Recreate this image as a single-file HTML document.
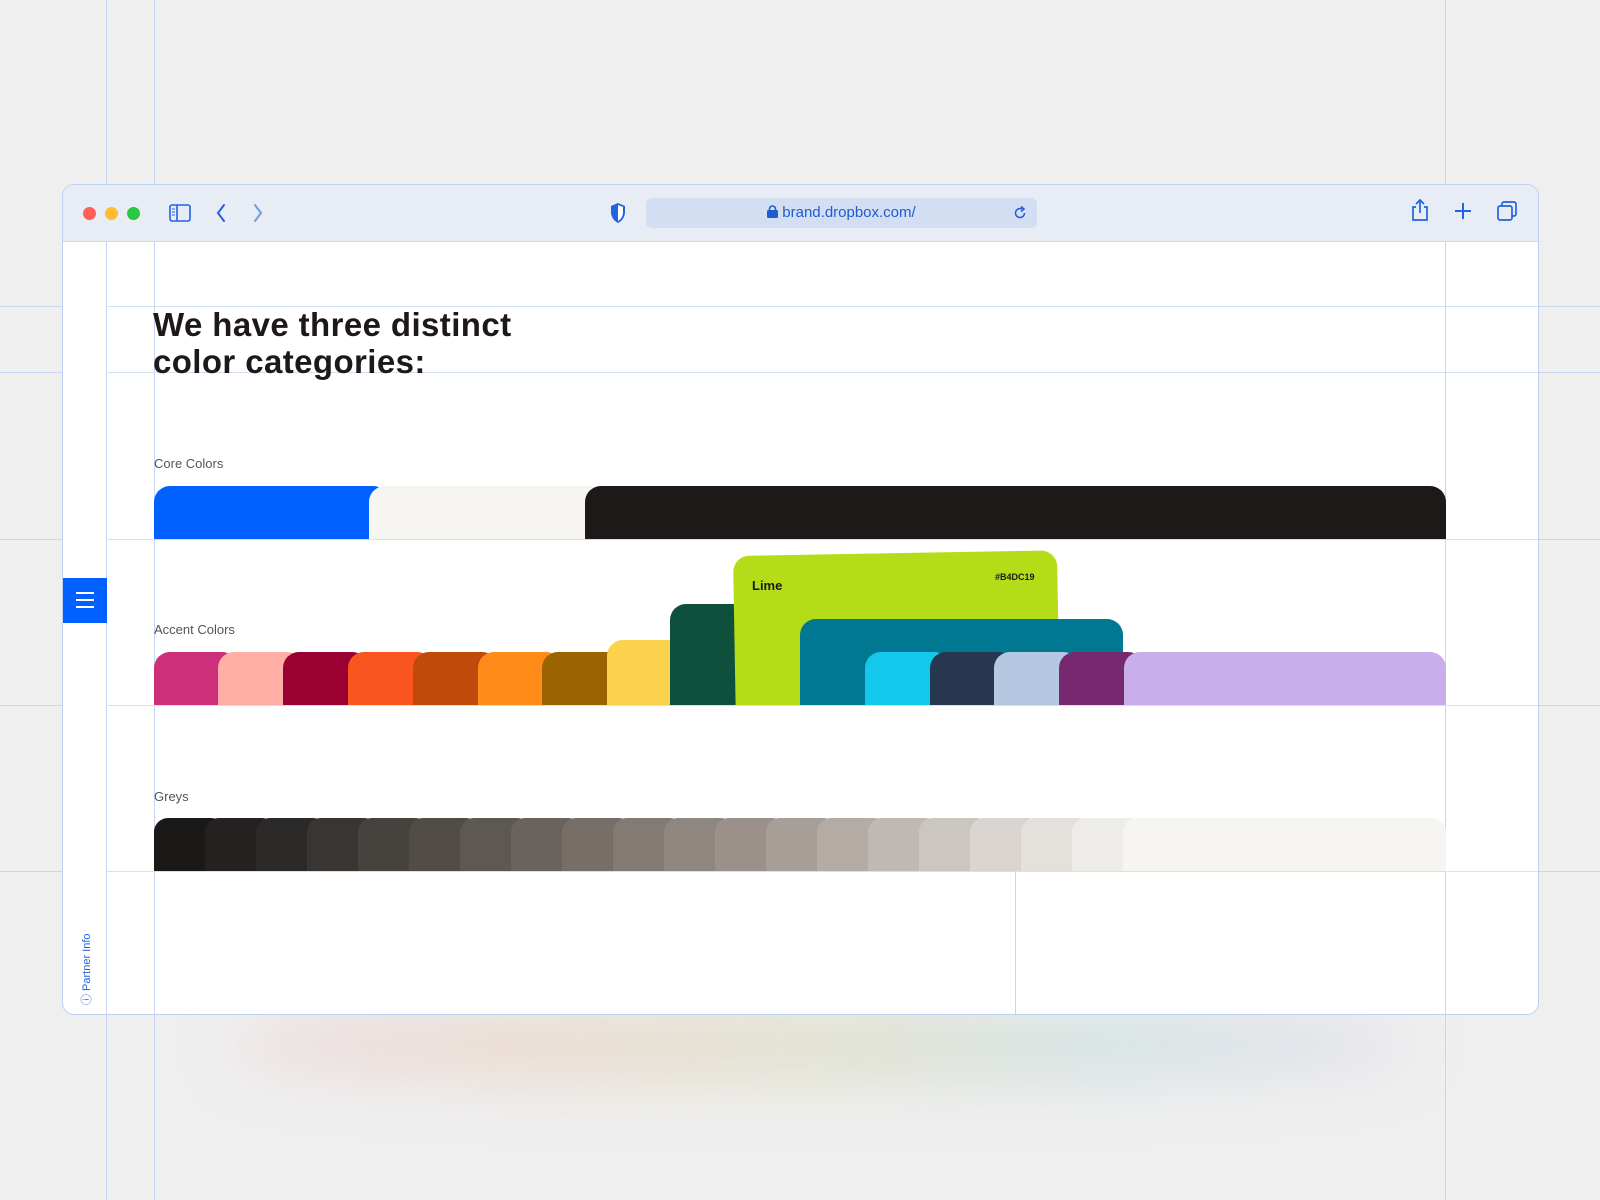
<!DOCTYPE html>
<html><head><meta charset="utf-8"><style>
*{margin:0;padding:0;box-sizing:border-box}
body{width:1600px;height:1200px;background:#efefef;position:relative;overflow:hidden;font-family:"Liberation Sans",sans-serif}
.vl{position:absolute;top:0;bottom:0;width:1px;background:#c6d6f3}
.hl{position:absolute;height:1px;background:#c6d6f3}
.win{position:absolute;left:62px;top:184px;width:1477px;height:831px;background:#fff;border:1.5px solid #bcd0f5;border-radius:12px;overflow:hidden}
.tb{position:absolute;left:0;top:0;right:0;height:57px;background:#e8edf5;border-bottom:1px solid #c9d8f2}
.dot{position:absolute;top:22px;width:13px;height:13px;border-radius:50%}
.ab{position:absolute}
.bar{position:absolute;border-radius:16px 16px 0 0}
.g{position:absolute;top:818px;height:53px;border-radius:14px 14px 0 0}
.lbl{position:absolute;left:154px;font-size:13px;color:#555}
</style></head><body>
<div style="position:absolute;left:230px;top:1005px;width:1180px;height:80px;filter:blur(30px);background:linear-gradient(90deg,#e8cccf,#e8d3c3,#dcdcc3,#cadde0,#d6d6e4);border-radius:50%;opacity:.7"></div>
<div class="vl" style="left:106px"></div>
<div class="vl" style="left:154px"></div>
<div class="vl" style="left:1445px"></div>
<div class="hl" style="left:0;right:0;top:306px"></div>
<div class="hl" style="left:0;right:0;top:372px"></div>
<div class="hl" style="left:0;right:0;top:539px"></div>
<div class="hl" style="left:0;right:0;top:705px"></div>
<div class="hl" style="left:0;right:0;top:871px"></div>
<div class="win">
<div class="ab" style="left:43px;top:0;bottom:0;width:1px;background:#c6d6f3"></div>
<div class="ab" style="left:91px;top:0;bottom:0;width:1px;background:#c6d6f3"></div>
<div class="ab" style="left:1382px;top:0;bottom:0;width:1px;background:#c6d6f3"></div>
<div class="ab" style="left:952px;top:686px;bottom:0;width:1px;background:#c6d6f3"></div>
<div class="ab" style="left:43px;right:0;top:121px;height:1px;background:#d4e0f5"></div>
<div class="ab" style="left:43px;right:0;top:187px;height:1px;background:#d4e0f5"></div>
<div class="ab" style="left:43px;right:0;top:354px;height:1px;background:#d4e0f5"></div>
<div class="ab" style="left:43px;right:0;top:520px;height:1px;background:#d4e0f5"></div>
<div class="ab" style="left:43px;right:0;top:686px;height:1px;background:#d4e0f5"></div>
<div class="tb">
<div class="dot" style="left:20px;background:#fe5f57"></div>
<div class="dot" style="left:42px;background:#febc2e"></div>
<div class="dot" style="left:64px;background:#28c840"></div>
<svg class="ab" style="left:106px;top:19px" width="22" height="18" viewBox="0 0 22 18"><rect x="1" y="1" width="20" height="16" rx="2" fill="none" stroke="#2163e0" stroke-width="1.6"/><line x1="8" y1="1" x2="8" y2="17" stroke="#2163e0" stroke-width="1.6"/><path d="M3 5h3M3 8h3M3 11h3" stroke="#2163e0" stroke-width="1"/></svg>
<svg class="ab" style="left:152px;top:18px" width="12" height="20"><path d="M9 2L3 10l6 8" fill="none" stroke="#2163e0" stroke-width="2" stroke-linecap="round"/></svg>
<svg class="ab" style="left:189px;top:18px" width="12" height="20"><path d="M3 2l6 8-6 8" fill="none" stroke="#6d9de8" stroke-width="2" stroke-linecap="round"/></svg>
<svg class="ab" style="left:546px;top:17px" width="18" height="22"><path d="M9 1L2 4v6c0 5 3 9 7 11 4-2 7-6 7-11V4z" fill="#2163e0"/><path d="M9 3v16c3-2 5-5 5-9V5z" fill="#fff"/></svg>
<div class="ab" style="left:583px;top:13px;width:391px;height:30px;background:#d3def2;border-radius:6px;text-align:center;font-size:15px;line-height:30px;color:#1f5bd1">
<svg width="11" height="13" style="vertical-align:-1px;margin-right:4px"><rect x="0" y="5" width="11" height="8" rx="1.5" fill="#1f5bd1"/><path d="M2.5 6V4a3 3 0 016 0v2" fill="none" stroke="#1f5bd1" stroke-width="1.6"/></svg>brand.dropbox.com/
<svg class="ab" style="right:10px;top:8px" width="14" height="14"><path d="M11.5 7A4.5 4.5 0 1 1 9 3" fill="none" stroke="#1f5bd1" stroke-width="1.5"/><path d="M8 0.5l3 2.5-3 2.5" fill="none" stroke="#1f5bd1" stroke-width="1.5"/></svg></div>
<svg class="ab" style="left:1347px;top:13px" width="20" height="24"><path d="M6 9H3v13h14V9h-3M10 2v13M6 6l4-4 4 4" fill="none" stroke="#2163e0" stroke-width="1.7"/></svg>
<svg class="ab" style="left:1391px;top:17px" width="18" height="18"><path d="M9 1v16M1 9h16" stroke="#2163e0" stroke-width="2"/></svg>
<svg class="ab" style="left:1434px;top:16px" width="20" height="20"><rect x="1" y="5" width="14" height="14" rx="2" fill="none" stroke="#2163e0" stroke-width="1.7"/><path d="M5 5V3a2 2 0 012-2h10a2 2 0 012 2v10a2 2 0 01-2 2h-2" fill="none" stroke="#2163e0" stroke-width="1.7"/></svg>
</div>
<div class="ab" style="left:0;top:393px;width:44px;height:45px;background:#0061fe"><svg width="44" height="45"><path d="M13 15h18M13 22h18M13 29h18" stroke="#fff" stroke-width="2"/></svg></div>
<div class="ab" style="transform:rotate(-90deg);transform-origin:0 0;font-size:11px;color:#2163e0;white-space:nowrap;top:820px;left:15px">ⓘ Partner Info</div>
</div>
<div class="ab" style="left:153px;top:306px;font-size:33px;font-weight:bold;line-height:37px;color:#1e1919;letter-spacing:0.4px">We have three distinct<br>color categories:</div>
<div class="lbl" style="top:456px">Core Colors</div>
<div class="bar" style="left:154px;top:486px;width:235px;height:53px;background:#0061fe"></div>
<div class="bar" style="left:369px;top:486px;width:236px;height:53px;background:#f7f5f2"></div>
<div class="bar" style="left:585px;top:486px;width:861px;height:53px;background:#1e1919;border-radius:16px 16px 0 0"></div>
<div class="lbl" style="top:622px">Accent Colors</div>
<div class="bar" style="left:154px;top:652px;width:84px;height:53px;background:#cd2f7b"></div>
<div class="bar" style="left:218px;top:652px;width:85px;height:53px;background:#ffafa5"></div>
<div class="bar" style="left:283px;top:652px;width:85px;height:53px;background:#9b0032"></div>
<div class="bar" style="left:348px;top:652px;width:85px;height:53px;background:#fa551e"></div>
<div class="bar" style="left:413px;top:652px;width:85px;height:53px;background:#be4b0a"></div>
<div class="bar" style="left:478px;top:652px;width:84px;height:53px;background:#ff8c19"></div>
<div class="bar" style="left:542px;top:652px;width:85px;height:53px;background:#9b6400"></div>
<div class="bar" style="left:607px;top:640px;width:83px;height:65px;background:#fad24b"></div>
<div class="bar" style="left:670px;top:604px;width:85px;height:101px;background:#0f503c"></div>
<div class="ab" style="left:720px;top:540px;width:360px;height:165px;overflow:hidden">
<div class="bar" style="left:13px;top:16px;width:324px;height:170px;background:#b4dc19;transform:rotate(-1deg);transform-origin:0 0;border-radius:16px 16px 0 0"></div>
</div>
<div class="ab" style="left:752px;top:578px;font-size:13px;font-weight:bold;color:#1e1919">Lime</div>
<div class="ab" style="left:995px;top:572px;font-size:9px;font-weight:bold;color:#1e1919">#B4DC19</div>
<div class="bar" style="left:800px;top:619px;width:323px;height:86px;background:#007891"></div>
<div class="bar" style="left:865px;top:652px;width:85px;height:53px;background:#14c8eb"></div>
<div class="bar" style="left:930px;top:652px;width:84px;height:53px;background:#283750"></div>
<div class="bar" style="left:994px;top:652px;width:85px;height:53px;background:#b4c8e1"></div>
<div class="bar" style="left:1059px;top:652px;width:85px;height:53px;background:#78286e"></div>
<div class="bar" style="left:1124px;top:652px;width:322px;height:53px;background:#c8afeb"></div>
<div class="lbl" style="top:789px">Greys</div>
<div id="gr"></div>
<script>
var c=["#1a1918","#242120","#2c2a28","#383532","#46423e","#524c47","#5e5853","#6a625c","#776e67","#837a73","#8f867f","#9b918a","#a79e97","#b4aba4","#c0b8b2","#ccc6c0","#d9d4cf","#e4e1dd","#eeece9"];
var h="";for(var i=0;i<c.length;i++){h+='<div class="g" style="left:'+(154+i*51)+'px;width:71px;background:'+c[i]+'"></div>';}
h+='<div class="g" style="left:1123px;width:323px;background:#f7f5f2"></div>';
document.getElementById("gr").innerHTML=h;
</script>
</body></html>
